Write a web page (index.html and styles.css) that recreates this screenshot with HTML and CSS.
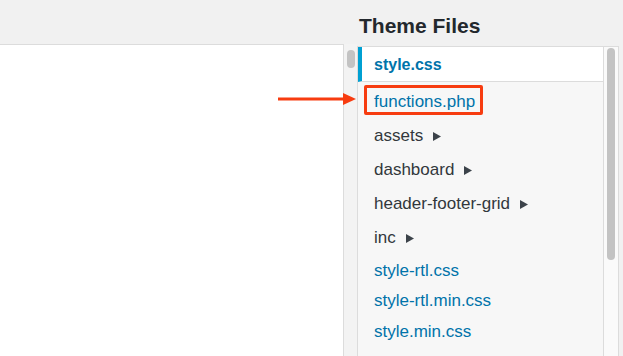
FILE: index.html
```html
<!DOCTYPE html>
<html>
<head>
<meta charset="utf-8">
<link rel="stylesheet" href="styles.css">
</head>
<body>
<div class="page">
  <div class="header">
    <h2 class="title">Theme Files</h2>
  </div>
  <div class="main">
    <div class="editor"></div>
    <div class="gutter"><div class="thumb small"></div></div>
    <div class="sidebar">
      <ul class="list">
        <li class="row current"><a class="file">style.css</a></li>
        <li class="row annotated"><a class="file">functions.php</a></li>
        <li class="row folder"><span>assets</span><svg class="tri" width="8" height="9" viewBox="0 0 8 9"><polygon points="0,0 8,4.5 0,9"/></svg></li>
        <li class="row folder"><span>dashboard</span><svg class="tri" width="8" height="9" viewBox="0 0 8 9"><polygon points="0,0 8,4.5 0,9"/></svg></li>
        <li class="row folder"><span>header-footer-grid</span><svg class="tri" width="8" height="9" viewBox="0 0 8 9"><polygon points="0,0 8,4.5 0,9"/></svg></li>
        <li class="row folder"><span>inc</span><svg class="tri" width="8" height="9" viewBox="0 0 8 9"><polygon points="0,0 8,4.5 0,9"/></svg></li>
        <li class="row plain"><a class="file">style-rtl.css</a></li>
        <li class="row plain"><a class="file">style-rtl.min.css</a></li>
        <li class="row plain"><a class="file">style.min.css</a></li>
      </ul>
      <div class="track"><div class="thumb big"></div></div>
    </div>
  </div>
  <svg class="arrow" width="84" height="16" viewBox="0 0 84 16">
    <line x1="2" y1="8" x2="70" y2="8"/>
    <polygon points="67,2 80,8 67,14"/>
  </svg>
  <div class="callout"></div>
</div>
</body>
</html>
```

FILE: styles.css
```css
html, body {
  margin: 0;
  padding: 0;
}
body {
  background: #f1f1f1;
  font-family: "Liberation Sans", Arial, sans-serif;
  color: #32373c;
  overflow: hidden;
}
.page {
  position: relative;
  width: 623px;
  height: 356px;
  display: flex;
  flex-direction: column;
  overflow: hidden;
}
.header {
  height: 44px;
  flex: none;
  padding-left: 359px;
  box-sizing: border-box;
}
.title {
  margin: 0;
  padding-top: 14px;
  font-size: 21px;
  line-height: 24px;
  font-weight: bold;
  color: #23282d;
}
.main {
  flex: 1;
  display: flex;
  min-height: 0;
}
.editor {
  width: 344px;
  box-sizing: border-box;
  background: #fff;
  border-top: 1px solid #dcdcdc;
  border-right: 1px solid #dcdcdc;
}
.gutter {
  width: 13px;
  background: #f3f3f3;
  padding-top: 6px;
  padding-left: 3px;
  box-sizing: border-box;
}
.thumb {
  width: 8px;
  border-radius: 4px;
  background: #c3c3c3;
}
.thumb.small {
  height: 18px;
}
.sidebar {
  margin-top: 2px;
  width: 262px;
  box-sizing: border-box;
  border: 1px solid #dcdcdc;
  border-bottom: none;
  display: flex;
}
.list {
  list-style: none;
  margin: 0;
  padding: 0;
  width: 245px;
  background: #f7f7f7;
  font-size: 17px;
}
.row {
  display: flex;
  align-items: center;
  padding-left: 16px;
  box-sizing: border-box;
}
.file {
  color: #0073aa;
}
.current {
  height: 35px;
  padding-top: 1px;
  background: #fff;
  border-left: 4px solid #00a0d2;
  border-bottom: 1px solid #dcdcdc;
  padding-left: 12px;
  font-weight: bold;
  font-size: 16px;
}
.annotated {
  height: 37px;
  padding-top: 3px;
}
.folder {
  height: 34px;
  color: #32373c;
}
.plain {
  height: 30.5px;
  padding-top: 1px;
}
.tri {
  margin-left: 10px;
  fill: #3c434a;
}
.track {
  width: 15px;
  background: #fafafa;
  border-left: 1px solid #dcdcdc;
  box-sizing: border-box;
  padding-top: 1px;
  padding-left: 3px;
}
.thumb.big {
  height: 212px;
}
.arrow {
  position: absolute;
  left: 276px;
  top: 91px;
}
.arrow line {
  stroke: #f73c10;
  stroke-width: 3;
}
.arrow polygon {
  fill: #f73c10;
}
.callout {
  position: absolute;
  left: 364px;
  top: 85px;
  width: 119px;
  height: 30px;
  box-sizing: border-box;
  border: 3px solid #f73c10;
  border-radius: 2px;
}
```
